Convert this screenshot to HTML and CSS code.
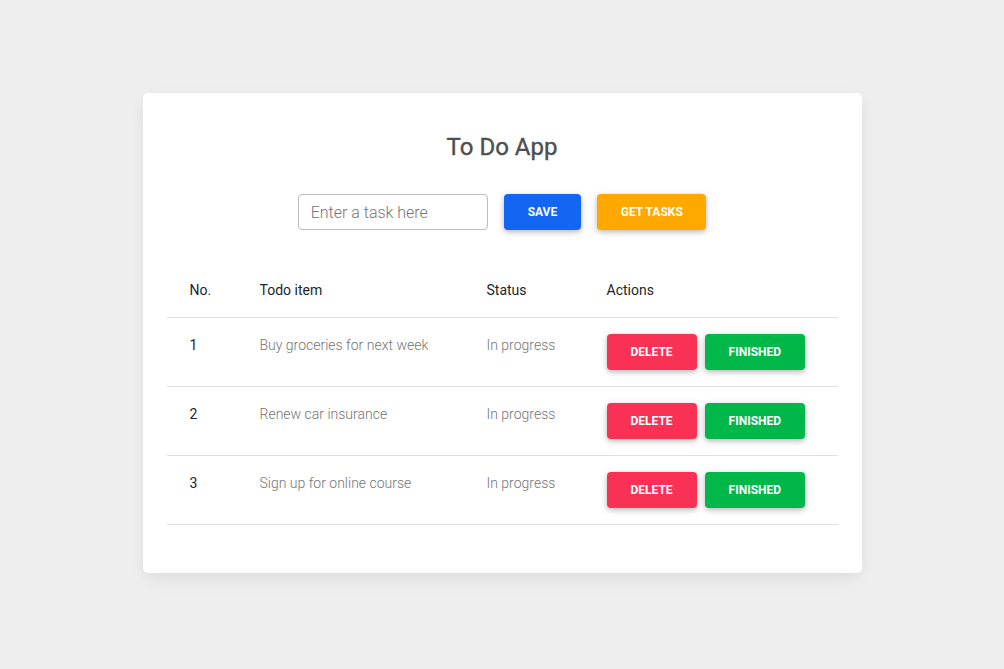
FILE: index.html
```html
<!DOCTYPE html>
<html lang="en">
<head>
<meta charset="utf-8">
<title>To Do App</title>
<link rel="stylesheet" href="styles.css">
</head>
<body>
  <main class="card">
    <h4 class="title">To Do App</h4>
    <form class="entry" onsubmit="return false">
      <input class="task-input" type="text" placeholder="Enter a task here">
      <button class="btn btn-primary" type="button">Save</button>
      <button class="btn btn-warning" type="button">Get tasks</button>
    </form>
    <table class="todo-table">
      <colgroup>
        <col class="c-no"><col class="c-item"><col class="c-status"><col class="c-actions">
      </colgroup>
      <thead>
        <tr><th>No.</th><th>Todo item</th><th>Status</th><th>Actions</th></tr>
      </thead>
      <tbody>
        <tr>
          <td class="num">1</td><td class="muted">Buy groceries for next week</td><td class="muted">In progress</td>
          <td><div class="actions"><button class="btn btn-danger" type="button">Delete</button><button class="btn btn-success" type="button">Finished</button></div></td>
        </tr>
        <tr>
          <td class="num">2</td><td class="muted">Renew car insurance</td><td class="muted">In progress</td>
          <td><div class="actions"><button class="btn btn-danger" type="button">Delete</button><button class="btn btn-success" type="button">Finished</button></div></td>
        </tr>
        <tr>
          <td class="num">3</td><td class="muted">Sign up for online course</td><td class="muted">In progress</td>
          <td><div class="actions"><button class="btn btn-danger" type="button">Delete</button><button class="btn btn-success" type="button">Finished</button></div></td>
        </tr>
      </tbody>
    </table>
  </main>
</body>
</html>
```
FILE: styles.css
```css
* { box-sizing: border-box; }
html, body { margin: 0; }
body {
  background: #eeeeee;
  font-family: Roboto, "Liberation Sans", sans-serif;
  color: #4f4f4f;
  padding-top: 93px;
  min-height: 100vh;
}
.card {
  width: 719px;
  margin: 0 auto;
  background: #fff;
  border-radius: 5px;
  padding: 24px 24px 48px;
  box-shadow: 0 2px 15px -3px rgba(0,0,0,.07), 0 10px 20px -2px rgba(0,0,0,.04);
}
.title {
  margin: 16px 0 32px;
  text-align: center;
  font-size: 24px;
  line-height: 29px;
  font-weight: 400;
  -webkit-text-stroke: 0.4px currentColor;
  color: #4f4f4f;
}
.entry {
  display: flex;
  justify-content: center;
  align-items: center;
  gap: 16px;
  margin: 0 0 33px;
}
.task-input {
  width: 190px;
  height: 36px;
  border: 1px solid #bdbdbd;
  border-radius: 4px;
  padding: 0 12px;
  font-family: inherit;
  font-size: 16px;
  font-weight: 300;
  color: #4f4f4f;
  outline: none;
}
.task-input::placeholder { color: #757575; opacity: 1; }
.btn {
  height: 36px;
  border: 0;
  border-radius: 4px;
  padding: 0 24px;
  font-family: inherit;
  font-size: 12px;
  font-weight: 700;
  text-transform: uppercase;
  color: #fff;
  cursor: pointer;
  box-shadow: 0 2px 5px 0 rgba(0,0,0,.2), 0 2px 10px 0 rgba(0,0,0,.1);
}
.btn-primary { background: #1266f1; }
.btn-warning { background: #ffa900; padding: 0 23.5px; }
.btn-danger { background: #f93154; }
.btn-success { background: #00b74a; }
.todo-table {
  width: 100%;
  border-collapse: collapse;
  table-layout: fixed;
  font-size: 14px;
}
.c-no { width: 70px; }
.c-item { width: 227px; }
.c-status { width: 120px; }
.todo-table th,
.todo-table td {
  text-align: left;
  vertical-align: top;
  padding: 16px 23px;
  line-height: 22px;
  border-bottom: 1px solid #e0e0e0;
}
.todo-table th { font-weight: 400; color: #212529; }
.todo-table td.num { color: #212529; font-weight: 400; }
.todo-table td.muted { color: #757575; font-weight: 300; }
.actions { display: flex; gap: 8px; }
```
